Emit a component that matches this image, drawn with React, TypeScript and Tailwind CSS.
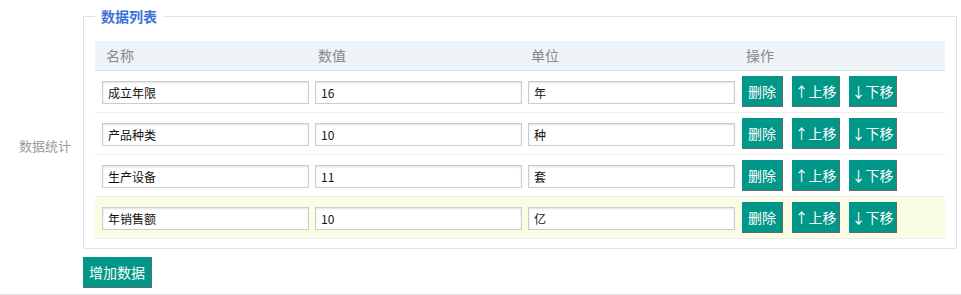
import React from 'react';

type Item = { name: string; value: string; unit: string };

const items: Item[] = [
  { name: '成立年限', value: '16', unit: '年' },
  { name: '产品种类', value: '10', unit: '种' },
  { name: '生产设备', value: '11', unit: '套' },
  { name: '年销售额', value: '10', unit: '亿' },
];

const btn =
  'h-[31px] bg-[#009688] text-white text-[14px] leading-[30px] border-r border-b border-[#666] text-center';

function Field({ value }: { value: string }) {
  return (
    <input
      type="text"
      defaultValue={value}
      className="w-[207px] h-[23px] border border-[#ccc] bg-white px-[5px] text-[12px] text-[#111] outline-none shadow-[inset_0_1px_2px_rgba(0,0,0,0.12)]"
    />
  );
}

export default function App() {
  return (
    <div className="w-[961px] h-[295px] bg-white font-['Noto_Sans_CJK_SC','Liberation_Sans',sans-serif]">
      <div className="flex items-center border-b border-[#e6e6e6] pb-[6px]">
        <div className="w-[83px] mt-[4px] pl-[19px] text-[13px] leading-[20px] text-[#999]">数据统计</div>

        <div className="w-[874px]">
          <fieldset className="mt-[6px] border border-[#dde3ec] px-[11px] pt-[15px] pb-[9px]">
            <legend className="px-[6px] text-[14px] leading-[20px] font-bold text-[#3d72d9]">数据列表</legend>

            <div className="grid grid-cols-[213px_213px_213px_1fr] h-[30px] bg-[#eef3f7] border-b border-[#d5dfea] text-[14px] leading-[29px] text-[#888]">
              <div className="pl-[11px]">名称</div>
              <div className="pl-[10px]">数值</div>
              <div className="pl-[10px]">单位</div>
              <div className="pl-[12px]">操作</div>
            </div>

            {items.map((it, i) => (
              <div
                key={it.name}
                className={
                  i === items.length - 1
                    ? 'grid grid-cols-[213px_213px_213px_1fr] items-center h-[42px] border-b border-[#eceeef] bg-[#fafde4]'
                    : 'grid grid-cols-[213px_213px_213px_1fr] items-center h-[42px] border-b border-[#eceeef]'
                }
              >
                <div className="pl-[7px]"><Field value={it.name} /></div>
                <div className="pl-[7px]"><Field value={it.value} /></div>
                <div className="pl-[7px]"><Field value={it.unit} /></div>
                <div className="flex gap-[9px] pl-[8px]">
                  <button type="button" className={`${btn} w-[41px]`}>删除</button>
                  <button type="button" className={`${btn} w-[48px]`}>↑上移</button>
                  <button type="button" className={`${btn} w-[48px]`}>↓下移</button>
                </div>
              </div>
            ))}
          </fieldset>

          <button
            type="button"
            className="mt-[8px] w-[69px] h-[31px] bg-[#009688] text-white text-[14px] leading-[30px] border-r border-b border-[#666]"
          >
            增加数据
          </button>
        </div>
      </div>
    </div>
  );
}
